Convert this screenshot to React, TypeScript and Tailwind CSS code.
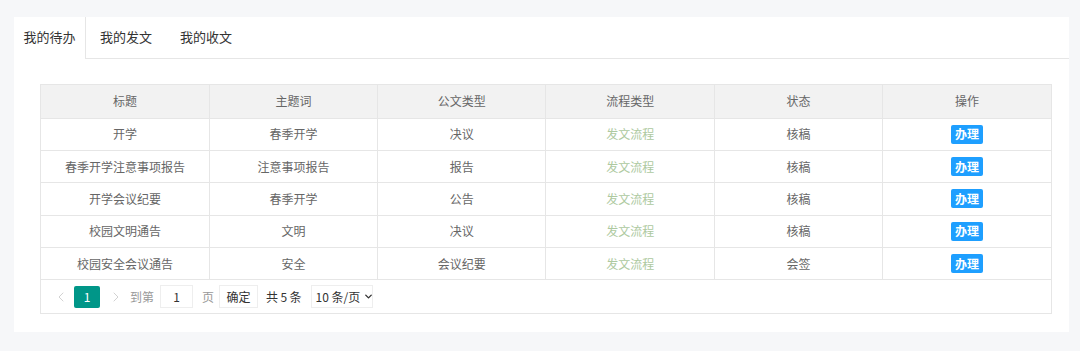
import { ChevronLeft, ChevronRight, ChevronDown } from "lucide-react";

const rows = [
  { title: "开学", keyword: "春季开学", type: "决议", flow: "发文流程", status: "核稿" },
  { title: "春季开学注意事项报告", keyword: "注意事项报告", type: "报告", flow: "发文流程", status: "核稿" },
  { title: "开学会议纪要", keyword: "春季开学", type: "公告", flow: "发文流程", status: "核稿" },
  { title: "校园文明通告", keyword: "文明", type: "决议", flow: "发文流程", status: "核稿" },
  { title: "校园安全会议通告", keyword: "安全", type: "会议纪要", flow: "发文流程", status: "会签" },
];

const headers = ["标题", "主题词", "公文类型", "流程类型", "状态", "操作"];

export default function App() {
  return (
    <div
      className="w-[1080px] h-[351px] bg-[#f6f7f9] pt-[17px] pl-[14px] overflow-hidden"
      style={{ fontFamily: '"Noto Sans CJK SC", "Noto Sans", sans-serif' }}
    >
      <div className="w-[1055px] h-[315px] bg-white">
        {/* tabs */}
        <div className="flex h-[42px] text-[13px] text-[#333]">
          <div className="w-[72px] flex items-center justify-center bg-white border-r border-[#e6e6e6] pb-[2px]">
            我的待办
          </div>
          <div className="flex-1 flex border-b border-[#e6e6e6] pb-[2px]">
            <div className="w-[80px] flex items-center justify-center">我的发文</div>
            <div className="w-[80px] flex items-center justify-center">我的收文</div>
          </div>
        </div>

        {/* table */}
        <div className="ml-[26px] mt-[25px] w-[1012px] border border-[#e6e6e6]">
          <table className="w-full border-collapse table-fixed text-[12px] text-[#666]">
            <thead>
              <tr className="h-[33px] bg-[#f2f2f2]">
                {headers.map((h, i) => (
                  <th
                    key={h}
                    className={`font-normal border-b border-[#e6e6e6] ${i < headers.length - 1 ? "border-r" : ""}`}
                  >
                    {h}
                  </th>
                ))}
              </tr>
            </thead>
            <tbody>
              {rows.map((r, i) => (
                <tr key={i} className="h-[32.4px]">
                  <td className="text-center border-b border-r border-[#e6e6e6]">{r.title}</td>
                  <td className="text-center border-b border-r border-[#e6e6e6]">{r.keyword}</td>
                  <td className="text-center border-b border-r border-[#e6e6e6]">{r.type}</td>
                  <td className="text-center border-b border-r border-[#e6e6e6] text-[#adc9a0]">{r.flow}</td>
                  <td className="text-center border-b border-r border-[#e6e6e6]">{r.status}</td>
                  <td className="text-center border-b border-[#e6e6e6]">
                    <span className="inline-flex items-center justify-center h-[19px] px-[4px] bg-[#1e9fff] text-white text-[12px] font-bold rounded-[2px]">
                      办理
                    </span>
                  </td>
                </tr>
              ))}
            </tbody>
          </table>

          {/* pagination */}
          <div className="h-[33px] flex items-center pl-[12px] text-[12px] text-[#333] whitespace-nowrap">
            <ChevronLeft className="w-[16px] h-[16px] text-[#d2d2d2]" strokeWidth={1.5} />
            <div className="ml-[5px] w-[26px] h-[22px] bg-[#009688] text-white flex items-center justify-center rounded-[2px]">
              1
            </div>
            <ChevronRight className="ml-[8px] w-[16px] h-[16px] text-[#d2d2d2]" strokeWidth={1.5} />
            <span className="ml-[6px] text-[#999]">到第</span>
            <div className="ml-[6px] w-[33px] h-[23px] border border-[#eee] flex items-center justify-center">1</div>
            <span className="ml-[9px] text-[#999]">页</span>
            <div className="ml-[5px] w-[39px] h-[23px] border border-[#eee] flex items-center justify-center">确定</div>
            <span className="ml-[8px]">共&thinsp;5&thinsp;条</span>
            <div className="ml-[9px] w-[62px] h-[23px] border border-[#eee] flex items-center pl-[4px] gap-[3px] whitespace-nowrap">
              <span>10 条/页</span>
              <ChevronDown className="w-[11px] h-[11px] text-[#333] shrink-0" strokeWidth={3} />
            </div>
          </div>
        </div>
      </div>
    </div>
  );
}
